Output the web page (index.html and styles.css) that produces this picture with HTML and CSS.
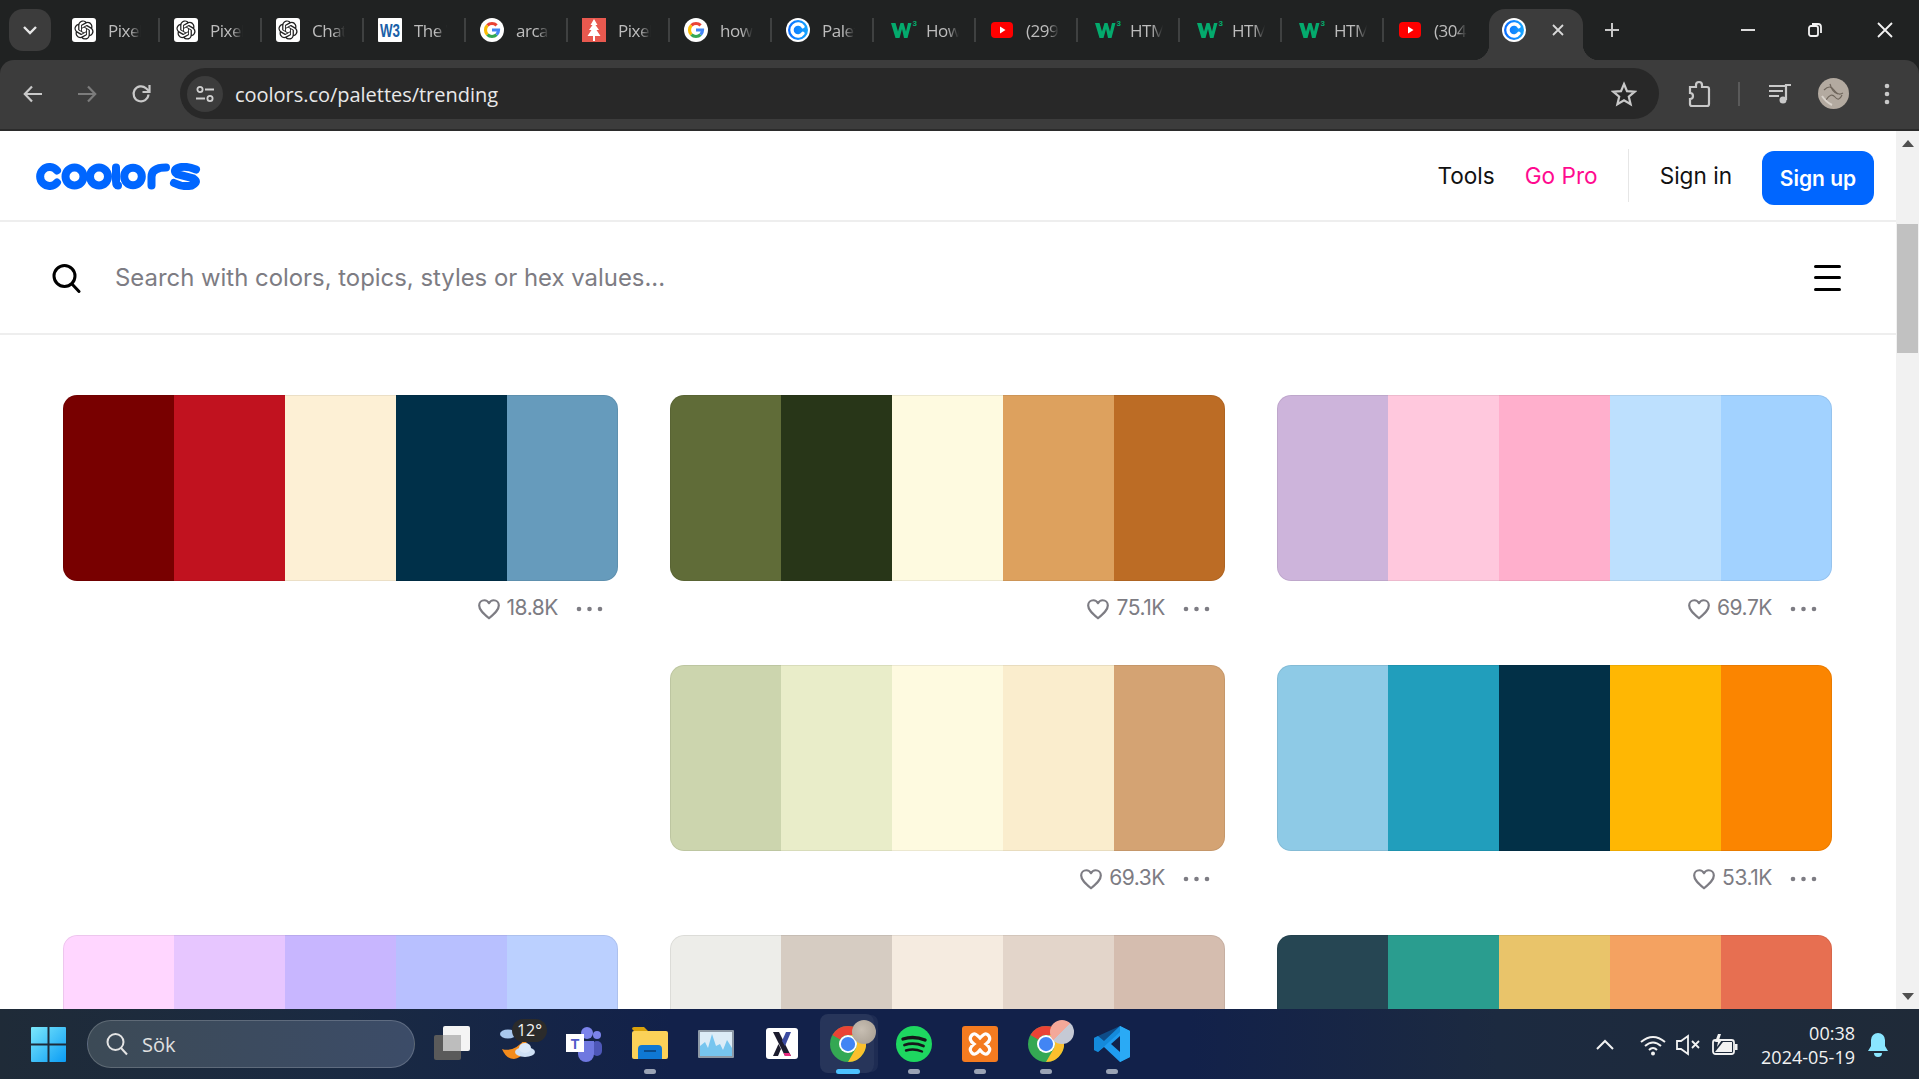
FILE: index.html
```html
<!DOCTYPE html>
<html lang="en">
<head>
<meta charset="utf-8">
<title>Trending color palettes - Coolors</title>
<link rel="stylesheet" href="styles.css">
</head>
<body>
<svg class="defs" width="0" height="0" aria-hidden="true">
  <symbol id="gpt" viewBox="0 0 24 24">
    <rect width="24" height="24" rx="3" fill="#fff"/>
    <path transform="translate(2.400 2.400) scale(.8)" fill="#222" d="M22.2819 9.8211a5.9847 5.9847 0 0 0-.5157-4.9108 6.0462 6.0462 0 0 0-6.5098-2.9A6.0651 6.0651 0 0 0 4.9807 4.1818a5.9847 5.9847 0 0 0-3.9977 2.9 6.0462 6.0462 0 0 0 .7427 7.0966 5.98 5.98 0 0 0 .511 4.9107 6.051 6.051 0 0 0 6.5146 2.9001A5.9847 5.9847 0 0 0 13.2599 24a6.0557 6.0557 0 0 0 5.7718-4.2058 5.9894 5.9894 0 0 0 3.9977-2.9001 6.0557 6.0557 0 0 0-.7475-7.0729zm-9.022 12.6081a4.4755 4.4755 0 0 1-2.8764-1.0408l.1419-.0804 4.7783-2.7582a.7948.7948 0 0 0 .3927-.6813v-6.7369l2.02 1.1686a.071.071 0 0 1 .038.052v5.5826a4.504 4.504 0 0 1-4.4945 4.4944zm-9.6607-4.1254a4.4708 4.4708 0 0 1-.5346-3.0137l.142.0852 4.783 2.7582a.7712.7712 0 0 0 .7806 0l5.8428-3.3685v2.3324a.0804.0804 0 0 1-.0332.0615L9.74 19.9502a4.4992 4.4992 0 0 1-6.1408-1.6464zM2.3408 7.8956a4.485 4.485 0 0 1 2.3655-1.9728V11.6a.7664.7664 0 0 0 .3879.6765l5.8144 3.3543-2.0201 1.1685a.0757.0757 0 0 1-.071 0l-4.8303-2.7865A4.504 4.504 0 0 1 2.3408 7.872zm16.5963 3.8558L13.1038 8.364 15.1192 7.2a.0757.0757 0 0 1 .071 0l4.8303 2.7913a4.4944 4.4944 0 0 1-.6765 8.1042v-5.6772a.79.79 0 0 0-.407-.667zm2.0107-3.0231l-.142-.0852-4.7735-2.7818a.7759.7759 0 0 0-.7854 0L9.409 9.2297V6.8974a.0662.0662 0 0 1 .0284-.0615l4.8303-2.7866a4.4992 4.4992 0 0 1 6.6802 4.66zM8.3065 12.863l-2.02-1.1638a.0804.0804 0 0 1-.038-.0567V6.0742a4.4992 4.4992 0 0 1 7.3757-3.4537l-.142.0805L8.704 5.459a.7948.7948 0 0 0-.3927.6813zm1.0976-2.3654l2.602-1.4998 2.6069 1.4998v2.9994l-2.5974 1.4997-2.6067-1.4997Z"/>
  </symbol>
  <symbol id="w3c" viewBox="0 0 24 24">
    <rect width="24" height="24" rx="1" fill="#fff"/>
    <text x="2" y="19" class="w3c-text" textLength="20" lengthAdjust="spacingAndGlyphs">W3</text>
  </symbol>
  <symbol id="goog" viewBox="0 0 24 24">
    <circle cx="12" cy="12" r="12" fill="#fff"/>
    <g fill="none" stroke-width="3.2">
      <path d="M7.4 7.4A6.5 6.5 0 0 1 16.6 7.4" stroke="#ea4335"/>
      <path d="M7.4 16.6A6.5 6.5 0 0 1 7.4 7.4" stroke="#fbbc05"/>
      <path d="M16.6 16.6A6.5 6.5 0 0 1 7.4 16.6" stroke="#34a853"/>
      <path d="M12 12H18.5A6.5 6.5 0 0 1 16.6 16.6" stroke="#4285f4"/>
    </g>
  </symbol>
  <symbol id="tree" viewBox="0 0 24 24">
    <rect width="24" height="24" fill="#e8594f"/>
    <path d="M12 1l3.500 6h-2l3.500 5h-2.500l4 6h-5.500v5h-2v-5H5.500l4-6H7l3.500-5h-2z" fill="#fff"/>
  </symbol>
  <symbol id="cool" viewBox="0 0 24 24">
    <defs><linearGradient id="coolg" x1="0" y1="0" x2="1" y2="0"><stop offset="0" stop-color="#0a6cff"/><stop offset="1" stop-color="#16a6ff"/></linearGradient></defs>
    <circle cx="12" cy="12" r="12" fill="#fff"/>
    <circle cx="12" cy="12" r="10" fill="url(#coolg)"/>
    <path d="M17 8.700A6 6 0 1 0 17 15.300" fill="none" stroke="#fff" stroke-width="3.400" stroke-linecap="round"/>
  </symbol>
  <symbol id="w3s" viewBox="0 0 28 24">
    <path d="M1 5h4.500l2.500 8.500L10.500 5h3l2.500 8.500L18 5h3.500l-4 15h-3.500L12 11 9.500 20H5.500z" fill="#04aa6d"/>
    <text x="22.500" y="8" class="w3s-text">3</text>
  </symbol>
  <symbol id="yt" viewBox="0 0 24 24">
    <rect x="1" y="4" width="22" height="16" rx="4" fill="#f00"/>
    <path d="M10 8.500l5.500 3.500-5.500 3.500z" fill="#fff"/>
  </symbol>
  <symbol id="heart" viewBox="0 0 22 22">
    <path d="M11 19.500C5 14.500 2 11.500 2 7.800 2 5 4.200 3 6.700 3 8.500 3 10.100 4 11 5.700 11.900 4 13.500 3 15.300 3 17.800 3 20 5 20 7.800 20 11.500 17 14.500 11 19.500z" fill="none" stroke="#7d7c83" stroke-width="2" stroke-linejoin="round"/>
  </symbol>
  <symbol id="dots" viewBox="0 0 27 6">
    <circle cx="3" cy="3" r="2.300" fill="#7d7c83"/><circle cx="13.500" cy="3" r="2.300" fill="#7d7c83"/><circle cx="24" cy="3" r="2.300" fill="#7d7c83"/>
  </symbol>
  <symbol id="chrome" viewBox="0 0 48 48">
    <circle cx="24" cy="24" r="24" fill="#34a853"/>
    <path d="M24 0A24 24 0 0 1 44.800 12H24A12 12 0 0 0 13.600 18L3.200 12A24 24 0 0 1 24 0z" fill="#ea4335"/>
    <path d="M44.800 12A24 24 0 0 1 24 48L34.400 30A12 12 0 0 0 24 12z" fill="#fbc02d"/>
    <circle cx="24" cy="24" r="12" fill="#fff"/>
    <circle cx="24" cy="24" r="9.500" fill="#4285f4"/>
  </symbol>
</svg>

<header class="tabstrip">
  <button class="tab-search"><svg width="16" height="10" viewBox="0 0 16 10"><path d="M2 2l6 6 6-6" fill="none" stroke="#e6e6e6" stroke-width="2.400"/></svg></button>
  <div class="tab"><svg class="fav"><use href="#gpt"/></svg><span class="tab-title">Pixel Art</span></div>
  <div class="tab"><svg class="fav"><use href="#gpt"/></svg><span class="tab-title">Pixel Art</span></div>
  <div class="tab"><svg class="fav"><use href="#gpt"/></svg><span class="tab-title">ChatGPT</span></div>
  <div class="tab"><svg class="fav"><use href="#w3c"/></svg><span class="tab-title">The W3C</span></div>
  <div class="tab"><svg class="fav"><use href="#goog"/></svg><span class="tab-title">arcade</span></div>
  <div class="tab"><svg class="fav"><use href="#tree"/></svg><span class="tab-title">Pixel Art</span></div>
  <div class="tab"><svg class="fav"><use href="#goog"/></svg><span class="tab-title">how to</span></div>
  <div class="tab"><svg class="fav"><use href="#cool"/></svg><span class="tab-title">Palettes</span></div>
  <div class="tab"><svg class="fav wide"><use href="#w3s"/></svg><span class="tab-title">How To</span></div>
  <div class="tab"><svg class="fav"><use href="#yt"/></svg><span class="tab-title">(299) You</span></div>
  <div class="tab"><svg class="fav wide"><use href="#w3s"/></svg><span class="tab-title">HTML</span></div>
  <div class="tab"><svg class="fav wide"><use href="#w3s"/></svg><span class="tab-title">HTML</span></div>
  <div class="tab"><svg class="fav wide"><use href="#w3s"/></svg><span class="tab-title">HTML</span></div>
  <div class="tab last"><svg class="fav"><use href="#yt"/></svg><span class="tab-title">(304) You</span></div>
  <div class="tab-active">
    <svg class="fav"><use href="#cool"/></svg>
    <svg class="tab-close" width="14" height="14" viewBox="0 0 14 14"><path d="M2 2l10 10M12 2L2 12" stroke="#d8d8d8" stroke-width="1.800"/></svg>
  </div>
  <svg class="new-tab" width="16" height="16" viewBox="0 0 16 16"><path d="M8 1v14M1 8h14" stroke="#c8c8c8" stroke-width="2"/></svg>
  <div class="win-controls">
    <svg class="win-btn" width="16" height="16" viewBox="0 0 16 16"><path d="M1 8h14" stroke="#f2f2f2" stroke-width="1.800"/></svg>
    <svg class="win-btn" width="16" height="16" viewBox="0 0 16 16"><rect x="2" y="4" width="9" height="10" rx="2" fill="none" stroke="#f2f2f2" stroke-width="1.800"/><path d="M5 2h6a3 3 0 0 1 3 3v6" fill="none" stroke="#f2f2f2" stroke-width="1.800"/></svg>
    <svg class="win-btn win-close" width="16" height="16" viewBox="0 0 16 16"><path d="M1 1l14 14M15 1L1 15" stroke="#f2f2f2" stroke-width="1.800"/></svg>
  </div>
</header>

<nav class="toolbar">
  <span class="tool"><svg width="22" height="22" viewBox="0 0 22 22"><path d="M20 11H3M10 3.500L2.800 11 10 18.500" fill="none" stroke="#c9c9c9" stroke-width="2.200"/></svg></span>
  <span class="tool"><svg width="22" height="22" viewBox="0 0 22 22"><path d="M2 11h17M12 3.500l7.200 7.500L12 18.500" fill="none" stroke="#7c7c7c" stroke-width="2.200"/></svg></span>
  <span class="tool"><svg width="22" height="22" viewBox="0 0 22 22"><path d="M18.500 11.500A7.500 7.500 0 1 1 16 5.200L19 8" fill="none" stroke="#c9c9c9" stroke-width="2.200"/><path d="M19.500 2v7h-7" fill="none" stroke="#c9c9c9" stroke-width="2.200"/></svg></span>
  <div class="omnibox">
    <span class="site-info"><svg width="20" height="18" viewBox="0 0 20 18"><circle cx="5" cy="4.500" r="2.600" fill="none" stroke="#d0d0d0" stroke-width="1.800"/><path d="M10 4.500h9M1 13.500h9" stroke="#d0d0d0" stroke-width="1.800"/><circle cx="15" cy="13.500" r="2.600" fill="none" stroke="#d0d0d0" stroke-width="1.800"/></svg></span>
    <span class="url">coolors.co/palettes/trending</span>
    <svg class="star" width="26" height="26" viewBox="0 0 26 26"><path d="M13 3l3 7.100 7.700.6-5.900 5 1.800 7.500L13 19.200l-6.600 4 1.800-7.500-5.900-5 7.700-.6z" fill="none" stroke="#c9c9c9" stroke-width="2.200"/></svg>
  </div>
  <span class="ext"><svg width="26" height="28" viewBox="0 0 26 28"><path d="M3 7h6V5a3 3 0 0 1 6 0v2h5a2 2 0 0 1 2 2v15a2 2 0 0 1-2 2H5a2 2 0 0 1-2-2v-5a3 3 0 0 0 0-6z" fill="none" stroke="#c9c9c9" stroke-width="2.200"/></svg></span>
  <span class="tool-sep"></span>
  <span class="media"><svg width="26" height="24" viewBox="0 0 26 24"><path d="M1 4h16M1 9h14M1 14h10M23 3h-5v15" fill="none" stroke="#c9c9c9" stroke-width="2.200"/><circle cx="15" cy="18" r="3.500" fill="#c9c9c9"/></svg></span>
  <svg class="avatar" width="31" height="31" viewBox="0 0 31 31">
    <circle cx="15.500" cy="15.500" r="15.500" fill="#b3aaa0"/>
    <g fill="none" stroke="#6f665c" stroke-width="1.200"><path d="M6 12q6-6 10 0t9 3"/><path d="M8 22q5-8 9-3t7-2"/><path d="M12 6q2 8 8 10"/></g>
    <path d="M4 18q4 6 10 9" fill="none" stroke="#d9d3cb" stroke-width="2"/>
  </svg>
  <span class="kebab"><svg width="6" height="24" viewBox="0 0 6 24"><circle cx="3" cy="4" r="2.300" fill="#c9c9c9"/><circle cx="3" cy="12" r="2.300" fill="#c9c9c9"/><circle cx="3" cy="20" r="2.300" fill="#c9c9c9"/></svg></span>
</nav>

<div class="viewport">
  <main class="page">
    <div class="site-head">
      <a class="logo" aria-label="coolors">
        <svg width="166" height="27" viewBox="0 0 166 27">
          <g fill="none" stroke="#0066ff" stroke-width="8" stroke-linecap="round">
            <path d="M21 7.500A9.500 9.500 0 1 0 21 19.500"/>
            <circle cx="38.500" cy="13.500" r="9"/>
            <circle cx="63" cy="13.500" r="9"/>
            <path d="M80 4.500V18Q80 22.500 82 22.500"/>
            <circle cx="97" cy="13.500" r="8.800"/>
            <path d="M115.500 22.500V14Q115.500 4.500 130 4.500"/>
            <path d="M160 6.500Q150 2.500 143 4.500Q136 7 141 11L157.500 15.500Q163 19 156 22.500Q147 24.500 138 20" stroke-width="8"/>
          </g>
        </svg>
      </a>
      <div class="site-nav">
        <a class="nav-tools">Tools</a>
        <a class="nav-pro">Go Pro</a>
        <span class="nav-sep"></span>
        <a class="nav-signin">Sign in</a>
        <a class="nav-signup">Sign up</a>
      </div>
    </div>
    <div class="search-row">
      <svg class="search-icon" width="30" height="30" viewBox="0 0 30 30"><circle cx="13.500" cy="13" r="10.500" fill="none" stroke="#000" stroke-width="3"/><path d="M21 21l7 7.500" stroke="#000" stroke-width="3" stroke-linecap="round"/></svg>
      <span class="search-ph">Search with colors, topics, styles or hex values...</span>
      <span class="burger"><i></i><i></i><i></i></span>
    </div>
    <div class="palettes">
      <article class="pal">
        <div class="swatches"><i style="background:#780000"></i><i style="background:#c1121f"></i><i style="background:#fdf0d5"></i><i style="background:#003049"></i><i style="background:#669bbc"></i></div>
        <div class="meta"><svg class="heart"><use href="#heart"/></svg><span class="likes">18.8K</span><svg class="more"><use href="#dots"/></svg></div>
      </article>
      <article class="pal">
        <div class="swatches"><i style="background:#606c38"></i><i style="background:#283618"></i><i style="background:#fefae0"></i><i style="background:#dda15e"></i><i style="background:#bc6c25"></i></div>
        <div class="meta"><svg class="heart"><use href="#heart"/></svg><span class="likes">75.1K</span><svg class="more"><use href="#dots"/></svg></div>
      </article>
      <article class="pal">
        <div class="swatches"><i style="background:#cdb4db"></i><i style="background:#ffc8dd"></i><i style="background:#ffafcc"></i><i style="background:#bde0fe"></i><i style="background:#a2d2ff"></i></div>
        <div class="meta"><svg class="heart"><use href="#heart"/></svg><span class="likes">69.7K</span><svg class="more"><use href="#dots"/></svg></div>
      </article>
      <article class="pal pal-skip">
        <div class="swatches"><i style="background:#ccd5ae"></i><i style="background:#e9edc9"></i><i style="background:#fefae0"></i><i style="background:#faedcd"></i><i style="background:#d4a373"></i></div>
        <div class="meta"><svg class="heart"><use href="#heart"/></svg><span class="likes">69.3K</span><svg class="more"><use href="#dots"/></svg></div>
      </article>
      <article class="pal">
        <div class="swatches"><i style="background:#8ecae6"></i><i style="background:#219ebc"></i><i style="background:#023047"></i><i style="background:#ffb703"></i><i style="background:#fb8500"></i></div>
        <div class="meta"><svg class="heart"><use href="#heart"/></svg><span class="likes">53.1K</span><svg class="more"><use href="#dots"/></svg></div>
      </article>
      <article class="pal">
        <div class="swatches"><i style="background:#ffd6ff"></i><i style="background:#e7c6ff"></i><i style="background:#c8b6ff"></i><i style="background:#b8c0ff"></i><i style="background:#bbd0ff"></i></div>
      </article>
      <article class="pal">
        <div class="swatches"><i style="background:#edede9"></i><i style="background:#d6ccc2"></i><i style="background:#f5ebe0"></i><i style="background:#e3d5ca"></i><i style="background:#d5bdaf"></i></div>
      </article>
      <article class="pal">
        <div class="swatches"><i style="background:#264653"></i><i style="background:#2a9d8f"></i><i style="background:#e9c46a"></i><i style="background:#f4a261"></i><i style="background:#e76f51"></i></div>
      </article>
    </div>
  </main>
  <aside class="scrollbar">
    <svg class="arrow" width="12" height="7" viewBox="0 0 12 7"><path d="M6 0l6 7H0z" fill="#505050"/></svg>
    <div class="thumb"></div>
    <svg class="arrow arrow-down" width="12" height="7" viewBox="0 0 12 7"><path d="M0 0h12L6 7z" fill="#505050"/></svg>
  </aside>
</div>

<footer class="taskbar">
  <svg class="start" width="35" height="35" viewBox="0 0 35 35">
    <defs><linearGradient id="win" x1="0" y1="0" x2="1" y2="1"><stop offset="0" stop-color="#7ce8fb"/><stop offset="1" stop-color="#0a9cf5"/></linearGradient></defs>
    <path d="M1 0h15.500v16.500H0V1a1 1 0 0 1 1-1zM18.500 0H34a1 1 0 0 1 1 1v15.500H18.500zM0 18.500h16.500V35H1a1 1 0 0 1-1-1zM18.500 18.500H35V34a1 1 0 0 1-1 1H18.500z" fill="url(#win)"/>
  </svg>
  <div class="task-search">
    <svg width="24" height="24" viewBox="0 0 24 24"><circle cx="10.500" cy="10" r="8" fill="none" stroke="#e4e4e4" stroke-width="2"/><path d="M16 16l6 6.500" stroke="#e4e4e4" stroke-width="2"/></svg>
    <span>Sök</span>
  </div>
  <div class="task-apps">
    <div class="app">
      <svg class="app-ico" viewBox="0 0 36 36"><rect x="0" y="9" width="27" height="25" rx="2" fill="#5a5a5a"/><rect x="9" y="0" width="27" height="25" rx="2" fill="#f4f4f4"/><rect x="9" y="9" width="18" height="16" fill="#bdbdbd"/></svg>
    </div>
    <div class="app">
      <svg class="app-ico" viewBox="0 0 36 36"><path d="M2 23Q14 27 26 12Q29 30 14 33Q6 33 2 23Z" fill="#f38b1c"/><ellipse cx="8" cy="8" rx="8" ry="4.500" fill="#a9c8ee"/><ellipse cx="25" cy="26" rx="10" ry="5" fill="#cfe0f5"/><ellipse cx="25" cy="22" rx="6" ry="5" fill="#dbe8f8"/></svg>
      <span class="temp">12°</span>
    </div>
    <div class="app">
      <svg class="app-ico" viewBox="0 0 36 36"><circle cx="31" cy="9" r="4" fill="#7b83eb"/><circle cx="21" cy="7" r="6" fill="#7b83eb"/><rect x="26" y="15" width="10" height="15" rx="5" fill="#4e57b8"/><path d="M12 15h16v13a8 8 0 0 1-16 0z" fill="#6f78e0"/><rect x="0" y="8" width="18" height="18" fill="#fff"/><text x="9" y="22.500" class="teams-t">T</text></svg>
    </div>
    <div class="app on">
      <svg class="app-ico" viewBox="0 0 36 36"><path d="M0 3a2 2 0 0 1 2-2h10l4 4H2z" fill="#d9a10b"/><rect x="0" y="5" width="36" height="28" rx="2" fill="#fbd158"/><path d="M6 23a4 4 0 0 1 4-4h16a4 4 0 0 1 4 4v10H6z" fill="#0f78d4"/><rect x="12" y="24" width="12" height="2" fill="#0a4c8c"/></svg>
      <b class="dot"></b>
    </div>
    <div class="app">
      <svg class="app-ico" viewBox="0 0 36 36"><rect x="0" y="4" width="36" height="28" rx="1" fill="#8d99a6"/><rect x="2" y="6" width="32" height="24" fill="#dcecf7"/><path d="M2 30V20l5-4 3 6 4-14 4 12 4-2 3 6 4-10 5 8v8z" fill="#76c5ef"/></svg>
    </div>
    <div class="app">
      <svg class="app-ico" viewBox="0 0 36 36"><rect x="2" y="2" width="32" height="31" rx="3" fill="#fff"/><path d="M9 6h6l12 24h-6z" fill="#1c1c2e"/><path d="M27 6h-5l-4 9 3 5z" fill="#3b4ba0"/><path d="M9 30h5l3-7-2.500-5z" fill="#1c1c2e"/><path d="M21 30h6l-1.500-3h-6z" fill="#e8297f"/></svg>
    </div>
    <div class="app active">
      <svg class="app-ico"><use href="#chrome"/></svg>
      <span class="badge badge-moon"></span>
      <b class="dot dot-on"></b>
    </div>
    <div class="app">
      <svg class="app-ico" viewBox="0 0 36 36"><circle cx="18" cy="18" r="18" fill="#1ed760"/><g fill="none" stroke="#15161a" stroke-linecap="round"><path d="M7 13Q18 9.500 29 14" stroke-width="3.400"/><path d="M8.500 19Q18 16 27.500 20" stroke-width="2.800"/><path d="M10 24.500Q18 22 26 25.500" stroke-width="2.400"/></g></svg>
      <b class="dot"></b>
    </div>
    <div class="app">
      <svg class="app-ico" viewBox="0 0 36 36"><rect width="36" height="36" rx="3" fill="#f47b20"/><path d="M10 9c3-3 6 1 8 3 2-2 5-6 8-3s2 6-2 9c4 3 5 6 2 9s-6-1-8-3c-2 2-5 6-8 3s-2-6 2-9c-4-3-5-6-2-9z" fill="none" stroke="#fff" stroke-width="3.200"/></svg>
      <b class="dot"></b>
    </div>
    <div class="app">
      <svg class="app-ico"><use href="#chrome"/></svg>
      <span class="badge badge-pink"></span>
      <b class="dot"></b>
    </div>
    <div class="app">
      <svg class="app-ico" viewBox="0 0 36 36"><path d="M26 0l10 5v26l-10 5-16-15-6 5-4-2V12l4-2 6 5zM26 10l-9 8 9 8z" fill="#1f9cf0"/><path d="M26 0l10 5v26l-10 5z" fill="#2aaaf5"/><path d="M4 10L0 12v12l4 2 22-20V0z" fill="#0a78c5" opacity=".5"/></svg>
      <b class="dot"></b>
    </div>
  </div>
  <div class="tray">
    <svg class="tray-chev" width="18" height="11" viewBox="0 0 18 11"><path d="M1 10l8-8 8 8" fill="none" stroke="#f2f2f2" stroke-width="2"/></svg>
    <svg class="tray-wifi" width="26" height="22" viewBox="0 0 26 22"><g fill="none" stroke="#f2f2f2" stroke-width="2"><path d="M1 8Q13-2 25 8"/><path d="M5 12Q13 5 21 12"/><path d="M9 16Q13 12 17 16"/></g><circle cx="13" cy="19.500" r="2" fill="#f2f2f2"/></svg>
    <svg class="tray-vol" width="24" height="22" viewBox="0 0 24 22"><path d="M1 7h4l7-5v18l-7-5H1z" fill="none" stroke="#f2f2f2" stroke-width="1.800"/><path d="M16 7l7 7M23 7l-7 7" stroke="#f2f2f2" stroke-width="1.800"/></svg>
    <svg class="tray-bat" width="26" height="22" viewBox="0 0 26 22"><rect x="1" y="6" width="21" height="14" rx="2.500" fill="none" stroke="#f2f2f2" stroke-width="1.800"/><rect x="23" y="10" width="2.500" height="6" fill="#f2f2f2"/><path d="M3 18l8-10h9v10z" fill="#f2f2f2"/><path d="M6 0L3 8h3l-1 5 5-7H7l2-6z" fill="#f2f2f2"/></svg>
    <div class="clock"><span>00:38</span><span>2024-05-19</span></div>
    <svg class="tray-bell" width="22" height="26" viewBox="0 0 22 26"><path d="M11 1a7 7 0 0 1 7 7v6l3 5H1l3-5V8a7 7 0 0 1 7-7z" fill="#8ae6ff"/><path d="M7 21h8a4 4 0 0 1-8 0z" fill="#8ae6ff"/></svg>
  </div>
</footer>
</body>
</html>
```
FILE: styles.css
```css
* { box-sizing: border-box; }
html, body { margin: 0; height: 100%; }
body {
  display: flex;
  flex-direction: column;
  height: 1079px;
  overflow: hidden;
  background: #202222;
  font-family: "Open Sans", "Noto Sans", sans-serif;
}
.defs { position: absolute; }
.w3c-text { font: 700 18px "Liberation Sans Narrow", "Liberation Sans", sans-serif; fill: #1a5fa8; }
.w3s-text { font: 700 8px "Liberation Sans", sans-serif; fill: #04aa6d; }
.teams-t { font: 700 14px "Liberation Sans", sans-serif; fill: #5059c9; text-anchor: middle; }

/* tab strip */
.tabstrip {
  flex: none;
  height: 60px;
  display: flex;
  align-items: center;
  padding-left: 9px;
  background: #202222;
}
.tab-search {
  width: 42px;
  height: 42px;
  margin-right: 7px;
  border: 0;
  border-radius: 14px;
  background: #3c3c3c;
  display: flex;
  align-items: center;
  justify-content: center;
  padding: 0;
}
.tab {
  flex: none;
  width: 102px;
  height: 24px;
  padding-left: 14px;
  display: flex;
  align-items: center;
  gap: 12px;
  border-right: 2px solid #3f4141;
}
.tab.last { border-right: 0; }
.fav { flex: none; width: 24px; height: 24px; }
.fav.wide { width: 28px; margin-left: 2px; margin-right: -4px; }
.tab-title {
  flex: none;
  width: 33px;
  margin-top: 2px;
  overflow: hidden;
  white-space: nowrap;
  font-size: 17px;
  line-height: 24px;
  letter-spacing: -.5px;
  color: #bdbdbd;
  -webkit-mask-image: linear-gradient(90deg, #000 65%, transparent 100%);
  mask-image: linear-gradient(90deg, #000 65%, transparent 100%);
}
.tab-active {
  position: relative;
  flex: none;
  align-self: flex-end;
  width: 94px;
  height: 51px;
  margin-left: 3px;
  padding: 9px 0 0 13px;
  display: flex;
  gap: 25px;
  border-radius: 16px 16px 0 0;
  background: #3c3c3c;
}
.tab-active::before, .tab-active::after {
  content: "";
  position: absolute;
  bottom: 0;
  width: 16px;
  height: 16px;
}
.tab-active::before { left: -16px; background: radial-gradient(circle at 0 0, transparent 16px, #3c3c3c 16.500px); }
.tab-active::after { right: -16px; background: radial-gradient(circle at 100% 0, transparent 16px, #3c3c3c 16.500px); }
.tab-close { margin-top: 5px; }
.new-tab { flex: none; margin-left: 21px; margin-top: -1px; }
.win-controls {
  margin-left: auto;
  display: flex;
  align-items: center;
  gap: 51px;
  padding-right: 26px;
  margin-top: -1px;
}
.win-close { margin-left: 3px; }

/* toolbar */
.toolbar {
  flex: none;
  height: 71px;
  padding: 0 0 2px 6px;
  display: flex;
  align-items: center;
  background: #3c3c3c;
  border-bottom: 2px solid #2b2b2b;
  border-radius: 14px 14px 0 0;
}
.tool { flex: none; width: 54px; display: flex; justify-content: center; }
.omnibox {
  flex: none;
  width: 1479px;
  height: 51px;
  margin-left: 12px;
  padding: 0 22px 0 7px;
  display: flex;
  align-items: center;
  border-radius: 26px;
  background: #282828;
}
.site-info {
  flex: none;
  width: 36px;
  height: 36px;
  border-radius: 50%;
  background: #3c3c3c;
  display: flex;
  align-items: center;
  justify-content: center;
}
.url {
  margin-left: 12px;
  padding-top: 1px;
  font-size: 20px;
  color: #e8e8e8;
  letter-spacing: -.03px;
}
.star { margin-left: auto; }
.ext { flex: none; margin-left: 28px; width: 26px; display: flex; }
.tool-sep { flex: none; width: 2px; height: 24px; margin-left: 25px; background: #5a5a5a; }
.media { flex: none; margin-left: 28px; width: 26px; display: flex; }
.avatar { flex: none; margin-left: 24px; }
.kebab { flex: none; margin-left: 35px; display: flex; }

/* page */
.viewport { flex: 1; min-height: 0; display: flex; }
.page { flex: none; width: 1896px; overflow: hidden; font-family: Inter, "Liberation Sans", sans-serif; background: #fff; }
.site-head {
  height: 91px;
  padding: 0 22px 0 36px;
  display: flex;
  align-items: center;
  justify-content: space-between;
  border-bottom: 2px solid #eee;
}
.logo { display: flex; margin-top: 2px; }
.site-nav { display: flex; align-items: center; font-size: 22.600px; color: #111; }
.nav-pro { margin-left: 30px; color: #ff0a8f; }
.nav-sep { width: 1px; height: 53px; margin-left: 30px; background: #e6e6e6; }
.nav-signin { margin-left: 31px; }
.nav-signup {
  margin-left: 30px;
  margin-top: 5px;
  width: 112px;
  height: 54px;
  display: flex;
  align-items: center;
  justify-content: center;
  border-radius: 12px;
  background: #0066ff;
  color: #fff;
  font-size: 21px;
  font-weight: 600;
}
.search-row {
  height: 113px;
  padding: 0 55px 0 51px;
  display: flex;
  align-items: center;
  border-bottom: 2px solid #eee;
}
.search-ph { margin-left: 34px; font-size: 23.900px; color: #7d7c83; }
.search-icon { flex: none; }
.burger { margin-left: auto; width: 27px; display: flex; flex-direction: column; gap: 8.500px; }
.burger i { display: block; height: 3px; border-radius: 2px; background: #000; }
.palettes {
  padding: 60px 0 0 63px;
  display: grid;
  grid-template-columns: repeat(3, 555px);
  column-gap: 52px;
  row-gap: 31px;
}
.pal-skip { grid-column: 2; }
.swatches {
  position: relative;
  height: 186px;
  display: flex;
  overflow: hidden;
  border-radius: 14px;
}
.swatches::after {
  content: "";
  position: absolute;
  inset: 0;
  border-radius: 14px;
  box-shadow: inset 0 0 0 1px rgba(0, 0, 0, .07);
}
.swatches i { flex: 1; }
.meta {
  height: 53px;
  padding-right: 15px;
  display: flex;
  align-items: center;
  justify-content: flex-end;
  color: #7d7c83;
}
.heart { width: 24px; height: 24px; flex: none; margin-top: 2px; }
.likes { margin-left: 6px; font-size: 21px; letter-spacing: -.45px; }
.more { width: 27px; height: 6px; flex: none; margin-left: 18px; margin-top: 3px; }

/* scrollbar */
.scrollbar {
  flex: none;
  width: 23px;
  display: flex;
  flex-direction: column;
  align-items: center;
  background: #f1f1f1;
}
.arrow { flex: none; margin-top: 9px; }
.thumb { flex: none; width: 21px; height: 129px; margin-top: 77px; background: #c1c1c1; }
.arrow-down { margin-top: auto; margin-bottom: 9px; }

/* taskbar */
.taskbar {
  flex: none;
  height: 70px;
  padding: 1px 30px 0 31px;
  display: flex;
  align-items: flex-start;
  background: linear-gradient(90deg, #1f2b38 0, #1a2a42 18%, #12214a 35%, #12214a 62%, #1c2a40 78%, #1f2a38 100%);
  color: #f2f2f2;
}
.start { flex: none; margin-top: 17px; }
.task-search {
  flex: none;
  width: 328px;
  height: 48px;
  margin: 10px 0 0 21px;
  padding-left: 17px;
  display: flex;
  align-items: center;
  gap: 13px;
  border: 1px solid rgba(255, 255, 255, .18);
  border-radius: 24px;
  background: linear-gradient(90deg, #3c4a56, #3c4c68);
  font-size: 20px;
  color: #e0e0e0;
}
.task-apps { flex: none; margin-left: 4px; display: flex; }
.app {
  position: relative;
  flex: none;
  width: 66px;
  height: 69px;
  padding-top: 16px;
  display: flex;
  flex-direction: column;
  align-items: center;
}
.app-ico { flex: none; width: 36px; height: 36px; }
.app.active::before {
  content: "";
  position: absolute;
  left: 5px;
  top: 4px;
  width: 54px;
  height: 59px;
  border-radius: 8px;
  background: rgba(255, 255, 255, .09);
  box-shadow: 5px 0 0 -1px rgba(255, 255, 255, .05);
}
.app.active .app-ico { position: relative; }
.dot { flex: none; width: 12px; height: 5px; margin-top: 7px; border-radius: 3px; background: #9aa3b5; }
.dot-on { position: relative; width: 24px; background: #4cc2ff; }
.temp {
  position: absolute;
  left: 27px;
  top: 9px;
  width: 35px;
  height: 23px;
  border-radius: 12px;
  background: #2b2b2b;
  font-size: 16px;
  line-height: 23px;
  text-align: center;
  color: #f4f4f4;
}
.badge { position: absolute; top: 10px; left: 37px; width: 24px; height: 24px; border-radius: 50%; }
.badge-moon { background: radial-gradient(circle at 40% 40%, #c8bfb3, #a39a8e); }
.badge-pink { background: linear-gradient(135deg, #f3a899 50%, #c5c9d4 50%); }
.tray { flex: none; margin-left: auto; display: flex; align-items: center; height: 69px; }
.tray-chev { flex: none; }
.tray-wifi { flex: none; margin-left: 26px; }
.tray-vol { flex: none; margin-left: 10px; }
.tray-bat { flex: none; margin-left: 12px; }
.clock {
  flex: none;
  width: 112px;
  margin-left: 5px;
  display: flex;
  flex-direction: column;
  align-items: flex-end;
  font-size: 18px;
  line-height: 24px;
}
.tray-bell { flex: none; margin-left: 12px; }
```
